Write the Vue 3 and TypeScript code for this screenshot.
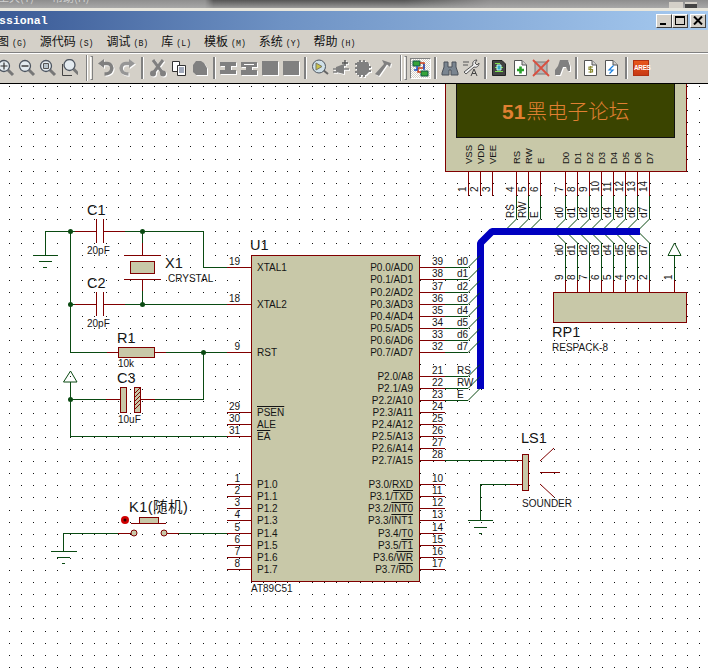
<template>
  <div class="app">
    <div class="backdrop">
      <span class="backdrop-menu">工具(T)</span>
      <span class="backdrop-menu">帮助(H)</span>
      <span class="backdrop-shadow"></span>
      <span class="backdrop-btn"></span>
      <span class="backdrop-btn dark"></span>
    </div>
    <div class="titlebar">
      <span class="title">ssional</span>
      <div class="win-btns">
        <button class="win-btn" type="button" aria-label="min"><i class="min"></i></button>
        <button class="win-btn" type="button" aria-label="max"><i class="max"></i></button>
        <button class="win-btn close" type="button" aria-label="close">
          <svg width="10" height="9" viewBox="0 0 10 9"><path d="M1 0.5 9 8.5M9 0.5 1 8.5" stroke="#000" stroke-width="2" /></svg>
        </button>
      </div>
    </div>
    <div class="menubar">
      <span v-for="m in menus" :key="m[0]" class="menu">{{ m[0] }}<em>({{ m[1] }})</em></span>
    </div>
    <div class="toolbar">
      <template v-for="(t, i) in tools" :key="i">
        <span v-if="t.sep" class="sep" :class="{ grip: t.grip }" :style="{ width: t.sep + 'px' }"><i></i></span>
        <button v-else-if="t.icon === 'ares'" class="tool" type="button"><span class="ares">ARES</span></button>
        <button v-else class="tool" :class="{ active: t.active, dim: dimmed.includes(t.icon!) }" type="button">
          <svg width="18" height="18" viewBox="0 0 18 18">
            <path
              v-for="(s, j) in icons[t.icon!]"
              :key="j"
              :d="s.d"
              :fill="s.fill || 'none'"
              :stroke="s.stroke || 'none'"
              :stroke-width="s.w || 1"
            />
          </svg>
        </button>
      </template>
    </div>
    <svg class="sheet" width="708" height="585" viewBox="0 84 708 585">
      <path :d="gridPath" fill="#111" shape-rendering="crispEdges" />

      <!-- LCD -->
      <g shape-rendering="crispEdges">
        <rect x="445.5" y="80.5" width="241" height="91" class="body" />
        <rect x="456.5" y="80.5" width="218" height="57" fill="#3a4400" stroke="#111" />
        <path v-for="x in lcdPins" :key="x" :d="`M${x + .5} 172V196`" class="pin" />
        <path v-for="x in lcdPins.slice(3)" :key="'w' + x" :d="`M${x + .5} 196V219L${x - 11.5} 231`" class="wire" shape-rendering="auto" />
        <path v-for="x in rpPins" :key="'r' + x" :d="`M${x - 11.5} 231L${x + .5} 243V280`" class="wire" shape-rendering="auto" />
        <path v-for="x in rpPins" :key="'p' + x" :d="`M${x + .5} 280V292`" class="pin" />
      </g>
      <text class="lcd-text" x="502" y="119"><tspan class="lcd-num">51</tspan><tspan dx="1">黑电子论坛</tspan></text>
      <text v-for="l in lcdLabels" :key="l[0]" class="txt small" :transform="`translate(${l[1]},164) rotate(-90)`">{{ l[0] }}</text>
      <text v-for="l in lcdNums" :key="l[0]" class="txt num" :transform="`translate(${l[1]},192) rotate(-90)`">{{ l[0] }}</text>
      <text v-for="l in topNets" :key="l[0]" class="txt num" :transform="`translate(${l[1]},${l[2]}) rotate(-90)`">{{ l[0] }}</text>
      <text v-for="(x, i) in rpPins" :key="'n' + i" class="txt num" :transform="`translate(${x - 2},255.5) rotate(-90)`">d{{ i }}</text>
      <text v-for="(x, i) in rpPins" :key="'m' + i" class="txt num" :transform="`translate(${x - 2},280) rotate(-90)`">{{ 9 - i }}</text>

      <!-- bus -->
      <path d="M640 231.5H492L480.5 243V389" class="bus" />

      <!-- RP1 -->
      <g shape-rendering="crispEdges">
        <rect x="553.5" y="292.5" width="133" height="30" class="body" />
        <path d="M674.5 255V280" class="wire" />
        <path d="M674.5 280V292" class="pin" />
      </g>
      <path d="M668 255.5H681L674.5 243Z" class="wire" />
      <text class="txt num" transform="translate(672,280) rotate(-90)">1</text>
      <text class="txt ref" x="552" y="337">RP1</text>
      <text class="txt val" x="552" y="351">RESPACK-8</text>

      <!-- U1 -->
      <rect x="251.5" y="255.5" width="168" height="326" class="body" shape-rendering="crispEdges" />
      <text class="txt ref" x="250" y="250">U1</text>
      <text class="txt val" x="251" y="592">AT89C51</text>
      <g v-for="p in leftPins" :key="p.n">
        <path :d="`M227 ${p.y + .5}H251`" class="pin" shape-rendering="crispEdges" />
        <text class="txt num" x="240" :y="p.y - 2" text-anchor="end">{{ p.n }}</text>
        <text class="txt num" x="257" :y="p.y + 4"><tspan :class="{ over: p.over }">{{ p.label }}</tspan></text>
      </g>
      <g v-for="p in rightPins" :key="p.n">
        <path :d="`M419 ${p.y + .5}H445`" class="pin" shape-rendering="crispEdges" />
        <text class="txt num" x="432" :y="p.y - 2">{{ p.n }}</text>
        <text class="txt num" x="413" :y="p.y + 4" text-anchor="end">{{ p.pre }}<tspan class="over">{{ p.bar }}</tspan></text>
        <template v-if="p.net">
          <path :d="`M445 ${p.y + .5}H468L480 ${p.y - 11.5}`" class="wire" />
          <text class="txt num" x="457" :y="p.y - 2">{{ p.net }}</text>
        </template>
      </g>

      <!-- clock and reset -->
      <g shape-rendering="crispEdges">
        <path class="wire" d="M45.5 255V231.5H75M125 231.5H203.5V267.5H227M142.5 231.5V243M142.5 291V304.5M70.5 231.5V352.5H107M70.5 304.5H75M125 304.5H227M166 352.5H227M203.5 352.5V399.5H155M70.5 382V436.5H227M70.5 399.5H106" />
        <path class="pin" d="M75 231.5H96M103 231.5H125M75 304.5H96M103 304.5H125M96.5 219V243M103.5 219V243M96.5 292V316M103.5 292V316M142.5 243V255M142.5 279V291M124 255.5H161M124 279.5H161M107 352.5H118M154 352.5H166M106 399.5H120M141 399.5H155" />
        <rect x="130.5" y="261.5" width="24" height="12" class="body" />
        <rect x="118.5" y="347.5" width="36" height="10" class="body" />
        <rect x="120.5" y="387.5" width="6" height="25" class="body" />
        <rect x="134.5" y="387.5" width="6" height="25" class="body" />
      </g>
      <path class="pin" d="M135 393L140 388M135 401L140 396M135 409L140 404M135 397L140 392M135 405L140 400" />
      <path class="wire" d="M63.5 382H77L70.5 371Z" />
      <path class="wire" d="M33 255.5H58M39 261.5H52M43 267.5H47" shape-rendering="crispEdges" />
      <circle v-for="j in junctions" :key="j[0] + '-' + j[1]" :cx="j[0]" :cy="j[1]" r="2.5" fill="#0a4a12" />
      <text class="txt ref" x="87" y="215">C1</text>
      <text class="txt val" x="87" y="254">20pF</text>
      <text class="txt ref" x="87" y="288">C2</text>
      <text class="txt val" x="87" y="327">20pF</text>
      <text class="txt ref" x="165" y="268">X1</text>
      <text class="txt val" x="168" y="282">CRYSTAL</text>
      <text class="txt ref" x="117" y="343">R1</text>
      <text class="txt val" x="118" y="367">10k</text>
      <text class="txt ref" x="117" y="383">C3</text>
      <text class="txt val" x="118" y="423">10uF</text>

      <!-- K1 -->
      <path class="wire" d="M118 533.5H63.5V551M179 533.5H227M51 551.5H77M57 557.5H70M62 563.5H65" shape-rendering="crispEdges" />
      <path class="pin" d="M118 533.5H131M167 533.5H179M131 523.5H166" shape-rendering="crispEdges" />
      <rect x="139.5" y="517.5" width="19" height="6" class="body" shape-rendering="crispEdges" />
      <circle cx="134" cy="533" r="3" class="body" />
      <circle cx="164" cy="533" r="3" class="body" />
      <circle cx="125" cy="520" r="4" fill="#d00000" />
      <circle cx="125" cy="520" r="1.5" fill="#300" />
      <text class="txt k1" x="129" y="512">K1(随机)</text>

      <!-- LS1 -->
      <path class="wire" d="M445 460.5H510M510 484.5H480.5V520M468 520.5H493M474 527.5H487M479 533.5H482" shape-rendering="crispEdges" />
      <path class="pin" d="M510 460.5H522M510 484.5H522M540 472.5H560" shape-rendering="crispEdges" />
      <path class="pin" d="M540 461L554 448M540 484L554 497" />
      <rect x="522.5" y="454.5" width="6" height="36" class="body" shape-rendering="crispEdges" />
      <text class="txt ref" x="521" y="443">LS1</text>
      <text class="txt val" x="522" y="507">SOUNDER</text>
    </svg>
  </div>
</template>

<script setup lang="ts">
type Shape = { d: string; fill?: string; stroke?: string; w?: number }
type Tool = { icon?: string; sep?: number; grip?: boolean; active?: boolean }

const menus = [
  ['图', 'G'], ['源代码', 'S'], ['调试', 'B'], ['库', 'L'], ['模板', 'M'], ['系统', 'Y'], ['帮助', 'H'],
]

const GR = '#808080'
const lens = (x: number, y: number): Shape[] => [
  { d: `M${x + 4} ${y + 4}L${x + 9} ${y + 9}`, stroke: '#777', w: 3 },
  { d: `M${x - 5.5} ${y}a5.5 5.5 0 1 0 11 0a5.5 5.5 0 1 0 -11 0Z`, fill: '#e4ebf0', stroke: '#4d5560', w: 1.3 },
]
const magnify = (mark: Shape[]): Shape[] => [...lens(7, 7), ...mark]
const doc = (inner: Shape[]): Shape[] => [
  { d: 'M3.5 1.5H11L15.5 6V16.5H3.5Z', fill: '#fff', stroke: '#555' },
  { d: 'M11 1.5V6H15.5', fill: '#cfcfcf', stroke: '#555' },
  ...inner,
]

const icons: Record<string, Shape[]> = {
  zoomIn: magnify([{ d: 'M3.5 7H10.5M7 3.5V10.5', stroke: '#333', w: 1.2 }]),
  zoomOut: magnify([{ d: 'M3.5 7H10.5', stroke: '#333', w: 1.4 }]),
  zoomAll: magnify([{ d: 'M4.5 4.5H9.5V9.5H4.5Z', fill: '#b8c4cc', stroke: '#555' }]),
  zoomArea: [
    { d: 'M2.5 5V16.5H12', stroke: '#444', w: 1 },
    ...lens(9.5, 6),
  ],
  undo: [
    { d: 'M5 4.5H10C14 4.5 15.5 8 14.5 11C13.5 14 10.5 15 7.5 15', stroke: GR, w: 3.4 },
    { d: 'M1 4.5L7 0V9Z', fill: GR },
  ],
  redo: [
    { d: 'M13 4.5H8C4 4.5 2.5 8 3.5 11C4.5 14 7.5 15 10.5 15', stroke: '#969696', w: 3.4 },
    { d: 'M17 4.5L11 0V9Z', fill: '#969696' },
  ],
  cut: [
    { d: 'M4 1L13 13M14 1L5 13', stroke: GR, w: 3 },
    { d: 'M1 14.5a3 3 0 1 0 6 0a3 3 0 1 0 -6 0ZM11 14.5a3 3 0 1 0 6 0a3 3 0 1 0 -6 0Z', fill: GR },
  ],
  copy: [
    { d: 'M2.5 2.5H9.5V12.5H2.5Z', fill: '#fff', stroke: '#333' },
    { d: 'M7.5 6.5H15.5V16.5H7.5Z', fill: '#fff', stroke: '#333' },
    { d: 'M9 9H14M9 11H14M9 13H14', stroke: '#457' },
  ],
  paste: [{ d: 'M5 2H10L13 4L16 9V16H5L2 13V6Z', fill: GR }],
  blockCopy: [{ d: 'M1 3H17V7H12V11H17V15H1V11H6V7H1Z', fill: GR }],
  blockMove: [
    { d: 'M1 3H17V8H12V11H17V16H1V11H6V8H1Z', fill: GR },
    { d: 'M4 5H14V6H4Z', fill: '#fff' },
  ],
  blockRot: [{ d: 'M1 2H17V16H1Z', fill: GR }],
  blockDel: [{ d: 'M1 2H17V16H1Z', fill: GR }],
  search: [
    { d: 'M12 11L17 15', stroke: '#666', w: 2 },
    { d: 'M1.5 7.5a6.5 6.5 0 1 0 13 0a6.5 6.5 0 1 0 -13 0Z', fill: '#cfe0e8', stroke: '#4d5560' },
    { d: 'M5 4L11 7.5L5 11Z', fill: '#c9c24a', stroke: '#776' },
  ],
  pick: [
    { d: 'M1 10H5M1 13H5', stroke: GR, w: 1.5 },
    { d: 'M4 8L12 5V15L4 13Z', fill: GR },
    { d: 'M12 10H17', stroke: GR, w: 1.5 },
    { d: 'M13 1V7M10 4H16', stroke: '#555', w: 1.4 },
  ],
  chip: [{ d: 'M4 3H6V1H8V3H10V1H12V3H15L16 5V7H18V9H16V11H18V13H16L13 16H12V18H10V16H8V18H6V16H4V14H2V12H4V10H2V8H4V6H2V4H4Z', fill: GR }],
  hammer: [{ d: 'M8 1L17 4L16 8L13 5.5L5 17L1 15L10 5Z', fill: GR }],
  net: [
    { d: 'M2 2H9V7H2Z', fill: '#37a43a', stroke: '#154' },
    { d: 'M10 12H17V17H10Z', fill: '#37a43a', stroke: '#154' },
    { d: 'M9 4H13V9H7V13H10', stroke: '#c83a14', w: 1.5 },
    { d: 'M6 7V11H3M13 5V11', stroke: '#1d55c8', w: 1.5 },
  ],
  binoc: [{ d: 'M3 3H7V8H11V3H15V8L17 14V16H10V11H8V16H1V14L3 8Z', fill: '#7a8590', stroke: '#4a5058' }],
  wrench: [
    { d: 'M1 3H7M1 6H6', stroke: '#555' },
    { d: 'M15 1C12 1 10 3 11 6L2 13L4 15L12 8C15 9 17 7 17 4L15 6L13 4Z', fill: '#eee', stroke: '#555' },
    { d: 'M9 17L12 10L15 17M10 14.5H14', stroke: '#444' },
  ],
  docGreen: [
    { d: 'M2.5 1.5H12L15.5 5V16.5H2.5Z', fill: '#444', stroke: '#222' },
    { d: 'M5 4.5H10M5 8.5H13M5 12.5H13', stroke: '#7ce04a' },
    { d: 'M7 6H11V11H7Z', fill: '#35a8c8', stroke: '#cfe' },
  ],
  docPlus: doc([{ d: 'M9.5 7.5V14.5M6 11H13', stroke: '#2aa02a', w: 2.6 }]),
  cross: [
    { d: 'M3 3H15V15H3Z', fill: '#b8b8b8', stroke: '#777' },
    { d: 'M1 1L17 17M17 1L1 17', stroke: '#d85040', w: 1.8 },
  ],
  gray: [{ d: 'M7 1H15L17 7V12H15L13 8L10 8L7 16H2V11L5 7Z', fill: GR }],
  docDollar: doc([{ d: 'M12 8H8V10.5H11.5V13H7.5M9.7 7V14', stroke: '#8a8a30', w: 1.2 }]),
  docBolt: doc([{ d: 'M11.5 6.5L7 11H11L7.5 14.5', stroke: '#1a80e0', w: 1.2 }]),
}

const dimmed = ['undo', 'redo', 'cut', 'paste', 'blockCopy', 'blockMove', 'blockRot', 'blockDel', 'pick', 'chip', 'hammer', 'gray']

const s = (sep: number, grip = false): Tool => ({ sep, grip })
const b = (icon: string, active = false): Tool => ({ icon, active })
const tools: Tool[] = [
  b('zoomIn'), b('zoomOut'), b('zoomAll'), b('zoomArea'), s(16, true),
  b('undo'), b('redo'), s(10),
  b('cut'), b('copy'), b('paste'), s(7),
  b('blockCopy'), b('blockMove'), b('blockRot'), b('blockDel'), s(8),
  b('search'), b('pick'), b('chip'), b('hammer'), s(16, true),
  b('net', true), s(9),
  b('binoc'), b('wrench'), s(7),
  b('docGreen'), b('docPlus'), b('cross'), b('gray'), s(7),
  b('docDollar'), b('docBolt'), s(9),
  b('ares'),
]

// the sheet's dot grid is a little over 12px apart
let gridPath = ''
for (let y = 86; y < 669; y += 12.1) {
  for (let x = 9; x < 708; x += 12.1) {
    gridPath += `M${Math.round(x)} ${Math.round(y)}h1v1h-1z`
  }
}

const lcdPins = [468, 480, 492, 516, 528, 540, 565, 577, 589, 601, 613, 625, 637, 649]
const rpPins = [565, 577, 589, 601, 613, 625, 637, 649]
const lcdLabels: [string, number][] = [
  ['VSS', 472], ['VDD', 484], ['VEE', 496], ['RS', 520], ['RW', 532], ['E', 544],
  ['D0', 569], ['D1', 581], ['D2', 593], ['D3', 605], ['D4', 617], ['D5', 629], ['D6', 641], ['D7', 653],
]
const lcdNums: [string, number][] = [
  ['1', 466], ['2', 478], ['3', 490], ['4', 514], ['5', 526], ['6', 538], ['7', 563], ['8', 575],
  ['9', 587], ['10', 599], ['11', 611], ['12', 623], ['13', 635], ['14', 647],
]
const topNets: [string, number, number][] = [
  ['RS', 514, 218], ['RW', 526, 218], ['E', 538, 218],
  ['d0', 563, 218], ['d1', 575, 218], ['d2', 587, 218], ['d3', 599, 218],
  ['d4', 611, 218], ['d5', 623, 218], ['d6', 635, 218], ['d7', 647, 218],
]

const leftPins = [
  { n: '19', y: 267, label: 'XTAL1' }, { n: '18', y: 304, label: 'XTAL2' }, { n: '9', y: 352, label: 'RST' },
  { n: '29', y: 412, label: 'PSEN', over: true }, { n: '30', y: 424, label: 'ALE' }, { n: '31', y: 436, label: 'EA', over: true },
  { n: '1', y: 484, label: 'P1.0' }, { n: '2', y: 496, label: 'P1.1' }, { n: '3', y: 508, label: 'P1.2' },
  { n: '4', y: 520, label: 'P1.3' }, { n: '5', y: 533, label: 'P1.4' }, { n: '6', y: 545, label: 'P1.5' },
  { n: '7', y: 557, label: 'P1.6' }, { n: '8', y: 569, label: 'P1.7' },
]

type Right = { n: string; y: number; pre: string; bar?: string; net?: string }
const rightPins: Right[] = [
  { n: '39', y: 267, pre: 'P0.0/AD0', net: 'd0' }, { n: '38', y: 279, pre: 'P0.1/AD1', net: 'd1' },
  { n: '37', y: 292, pre: 'P0.2/AD2', net: 'd2' }, { n: '36', y: 304, pre: 'P0.3/AD3', net: 'd3' },
  { n: '35', y: 316, pre: 'P0.4/AD4', net: 'd4' }, { n: '34', y: 328, pre: 'P0.5/AD5', net: 'd5' },
  { n: '33', y: 340, pre: 'P0.6/AD6', net: 'd6' }, { n: '32', y: 352, pre: 'P0.7/AD7', net: 'd7' },
  { n: '21', y: 376, pre: 'P2.0/A8', net: 'RS' }, { n: '22', y: 388, pre: 'P2.1/A9', net: 'RW' },
  { n: '23', y: 400, pre: 'P2.2/A10', net: 'E' }, { n: '24', y: 412, pre: 'P2.3/A11' },
  { n: '25', y: 424, pre: 'P2.4/A12' }, { n: '26', y: 436, pre: 'P2.5/A13' },
  { n: '27', y: 448, pre: 'P2.6/A14' }, { n: '28', y: 460, pre: 'P2.7/A15' },
  { n: '10', y: 484, pre: 'P3.0/RXD' }, { n: '11', y: 496, pre: 'P3.1/', bar: 'TXD' },
  { n: '12', y: 508, pre: 'P3.2/', bar: 'INT0' }, { n: '13', y: 520, pre: 'P3.3/', bar: 'INT1' },
  { n: '14', y: 533, pre: 'P3.4/T0' }, { n: '15', y: 545, pre: 'P3.5/', bar: 'T1' },
  { n: '16', y: 557, pre: 'P3.6/', bar: 'WR' }, { n: '17', y: 569, pre: 'P3.7/', bar: 'RD' },
]

const junctions: [number, number][] = [[70.5, 231.5], [142.5, 231.5], [70.5, 304.5], [142.5, 304.5], [203.5, 352.5], [70.5, 399.5]]
</script>

<style scoped>
.app { width: 708px; height: 669px; overflow: hidden; background: #fff; display: flex; flex-direction: column; font-family: "Noto Sans CJK SC", "Liberation Sans", sans-serif; }

.backdrop { height: 8px; flex: none; overflow: hidden; display: flex; background: linear-gradient(180deg, #8e8e8e, #a8a8a8); color: #cfcfcf; font-size: 11px; position: relative; }
.backdrop-menu { margin: -10px 0 0 -2px; line-height: 14px; }
.backdrop-menu + .backdrop-menu { margin-left: 18px; }
.backdrop-shadow { position: absolute; left: 205px; top: 0; width: 285px; height: 8px; background: linear-gradient(180deg, #555 0, #9a9a9a 100%); mask-image: linear-gradient(90deg, transparent 0, #000 3%, #000 70%, transparent 100%); }
.backdrop-btn { position: absolute; left: 669px; top: 2px; width: 14px; height: 6px; background: #d4d0c8; }
.backdrop-btn.dark { left: 685px; width: 12px; background: #444; border-top: 2px solid #d4d0c8; }

.titlebar { height: 22px; flex: none; box-sizing: border-box; border-top: 3px solid #e8e6dc; background: linear-gradient(90deg, #3a5a96 0, #6e92c4 40%, #a6caf0 100%); display: flex; align-items: center; justify-content: space-between; overflow: hidden; }
.title { font-family: "Liberation Mono", monospace; font-weight: 700; font-size: 11.5px; color: #fff; margin-left: -1px; letter-spacing: .05px; }
.win-btns { display: flex; gap: 0; margin-right: 2px; }
.win-btn { width: 16px; height: 14px; box-sizing: border-box; padding: 0; border: 1px solid; border-color: #fff #404040 #404040 #fff; background: #d4d0c8; position: relative; display: flex; align-items: center; justify-content: center; }
.win-btn.close { margin-left: 2px; }
.min { width: 6px; height: 2px; background: #000; margin-top: 6px; margin-right: 2px; }
.max { width: 10px; height: 9px; box-sizing: border-box; border: 1px solid #000; border-top-width: 2px; }

.menubar { height: 22px; flex: none; background: #d4d0c8; display: flex; align-items: center; gap: 13px; margin-left: -3px; padding-bottom: 1px; box-sizing: border-box; font-size: 12px; color: #111; }
.menu em { font-family: "Liberation Mono", monospace; font-style: normal; font-size: 8.2px; margin-left: 3px; }

.toolbar { height: 32px; flex: none; box-sizing: border-box; background: #d4d0c8; border-top: 1px solid #808080; box-shadow: inset 0 1px 0 #fff; border-bottom: 1px solid #000; display: flex; align-items: center; overflow: hidden; }
.toolbar > :first-child { margin-left: -4.5px; }
.tool { width: 21px; height: 21px; flex: none; padding: 0; border: none; background: none; display: flex; align-items: center; justify-content: center; }
.tool.active { border: 1px solid; border-color: #808080 #fff #fff #808080; background: repeating-conic-gradient(#fff 0 25%, #d4d0c8 0 50%) 0 0 / 2px 2px; }
.tool.dim svg { filter: drop-shadow(1px 1px 0 #fff); }
.ares { width: 16px; height: 16px; background: linear-gradient(180deg, #e8581c, #c83a14); border: 1px solid #b03010; box-sizing: border-box; color: #fff; font: 700 6.4px/14px "Liberation Sans", sans-serif; letter-spacing: -.3px; text-align: center; }
.sep { flex: none; height: 24px; display: flex; justify-content: center; }
.sep i { width: 2px; height: 22px; margin-top: 1px; background: #808080; border-right: 1px solid #fff; }
.sep.grip { gap: 2px; }
.sep.grip::before { content: ""; width: 1px; height: 26px; margin: -1px 0 0 3px; background: #808080; border-right: 1px solid #fff; }
.sep.grip i { width: 3px; height: 24px; margin-top: 0; box-sizing: border-box; border: 1px solid; border-color: #808080 #808080 #808080 #fff; background: #e8e6e0; }

.sheet { display: block; flex: none; }
.body { fill: #c8c8a8; stroke: #800000; stroke-width: 1; }
.pin { fill: none; stroke: #800000; stroke-width: 1; }
.wire { fill: none; stroke: #0a4a12; stroke-width: 1; }
.bus { fill: none; stroke: #0000c0; stroke-width: 7; stroke-linejoin: bevel; }
.txt { font-family: "Liberation Sans", sans-serif; fill: #151515; }
.num { font-size: 10px; }
.small { font-size: 9.5px; }
.ref { font-size: 14.5px; }
.val { font-size: 10px; }
.k1 { font-family: "Liberation Sans", "Noto Sans CJK SC", sans-serif; font-size: 14.5px; letter-spacing: .5px; }
.over { text-decoration: overline; }
.lcd-text { font-family: "Noto Sans CJK SC", sans-serif; font-size: 20.6px; font-weight: 300; fill: #e08032; }
.lcd-num { font-family: "Liberation Sans", sans-serif; font-weight: 700; font-size: 21px; }
</style>
